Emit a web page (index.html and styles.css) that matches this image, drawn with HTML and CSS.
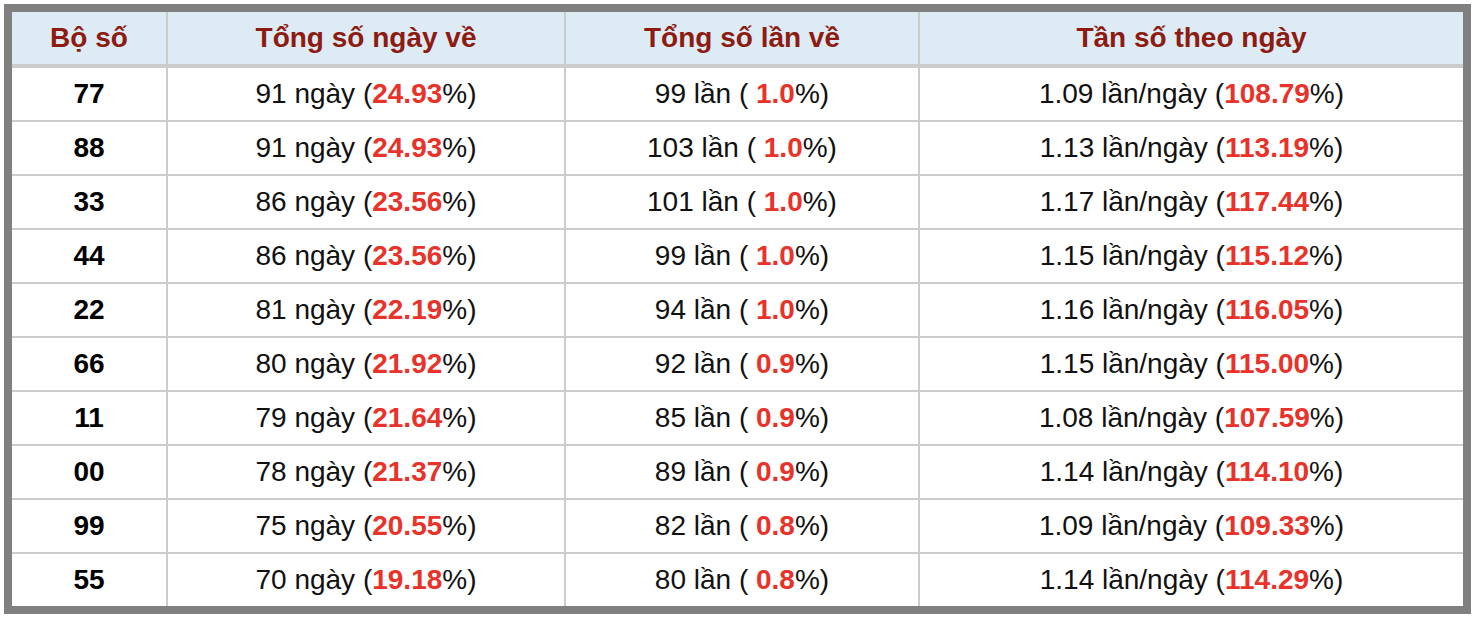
FILE: index.html
```html
<!DOCTYPE html>
<html lang="vi">
<head>
<meta charset="utf-8">
<title>Thống kê</title>
<link rel="stylesheet" href="styles.css">
</head>
<body>
<div class="frame">
  <div class="grid head">
    <div class="cell">Bộ số</div>
    <div class="cell">Tổng số ngày về</div>
    <div class="cell">Tổng số lần về</div>
    <div class="cell">Tần số theo ngày</div>
  </div>
  <div class="grid body">
    <div class="cell num">77</div><div class="cell">91 ngày (<b>24.93</b>%)</div><div class="cell">99 lần ( <b>1.0</b>%)</div><div class="cell">1.09 lần/ngày (<b>108.79</b>%)</div>
    <div class="cell num">88</div><div class="cell">91 ngày (<b>24.93</b>%)</div><div class="cell">103 lần ( <b>1.0</b>%)</div><div class="cell">1.13 lần/ngày (<b>113.19</b>%)</div>
    <div class="cell num">33</div><div class="cell">86 ngày (<b>23.56</b>%)</div><div class="cell">101 lần ( <b>1.0</b>%)</div><div class="cell">1.17 lần/ngày (<b>117.44</b>%)</div>
    <div class="cell num">44</div><div class="cell">86 ngày (<b>23.56</b>%)</div><div class="cell">99 lần ( <b>1.0</b>%)</div><div class="cell">1.15 lần/ngày (<b>115.12</b>%)</div>
    <div class="cell num">22</div><div class="cell">81 ngày (<b>22.19</b>%)</div><div class="cell">94 lần ( <b>1.0</b>%)</div><div class="cell">1.16 lần/ngày (<b>116.05</b>%)</div>
    <div class="cell num">66</div><div class="cell">80 ngày (<b>21.92</b>%)</div><div class="cell">92 lần ( <b>0.9</b>%)</div><div class="cell">1.15 lần/ngày (<b>115.00</b>%)</div>
    <div class="cell num">11</div><div class="cell">79 ngày (<b>21.64</b>%)</div><div class="cell">85 lần ( <b>0.9</b>%)</div><div class="cell">1.08 lần/ngày (<b>107.59</b>%)</div>
    <div class="cell num">00</div><div class="cell">78 ngày (<b>21.37</b>%)</div><div class="cell">89 lần ( <b>0.9</b>%)</div><div class="cell">1.14 lần/ngày (<b>114.10</b>%)</div>
    <div class="cell num">99</div><div class="cell">75 ngày (<b>20.55</b>%)</div><div class="cell">82 lần ( <b>0.8</b>%)</div><div class="cell">1.09 lần/ngày (<b>109.33</b>%)</div>
    <div class="cell num">55</div><div class="cell">70 ngày (<b>19.18</b>%)</div><div class="cell">80 lần ( <b>0.8</b>%)</div><div class="cell">1.14 lần/ngày (<b>114.29</b>%)</div>
  </div>
</div>
</body>
</html>
```

FILE: styles.css
```css
html, body {
  margin: 0;
  padding: 0;
  background: #ffffff;
}
body {
  padding: 4px;
  font-family: "Liberation Sans", Arial, Helvetica, sans-serif;
}
.frame {
  width: 1451px;
  border: 8px solid #808080;
  background: #cccccc;
}
.grid {
  display: grid;
  grid-template-columns: 154px 396px 352px 543px;
  column-gap: 2px;
  row-gap: 2px;
  background: #cccccc;
}
.head {
  margin-bottom: 4px;
}
.cell {
  height: 52px;
  display: flex;
  align-items: center;
  justify-content: center;
  background: #ffffff;
  color: #111111;
  font-size: 28px;
  white-space: pre;
}
.head .cell {
  background: #dcebf4;
  color: #8e1b12;
  font-weight: bold;
  font-size: 28px;
}
.cell b {
  color: #e8322a;
  font-weight: bold;
}
.cell.num {
  font-weight: bold;
  color: #000000;
}
```
